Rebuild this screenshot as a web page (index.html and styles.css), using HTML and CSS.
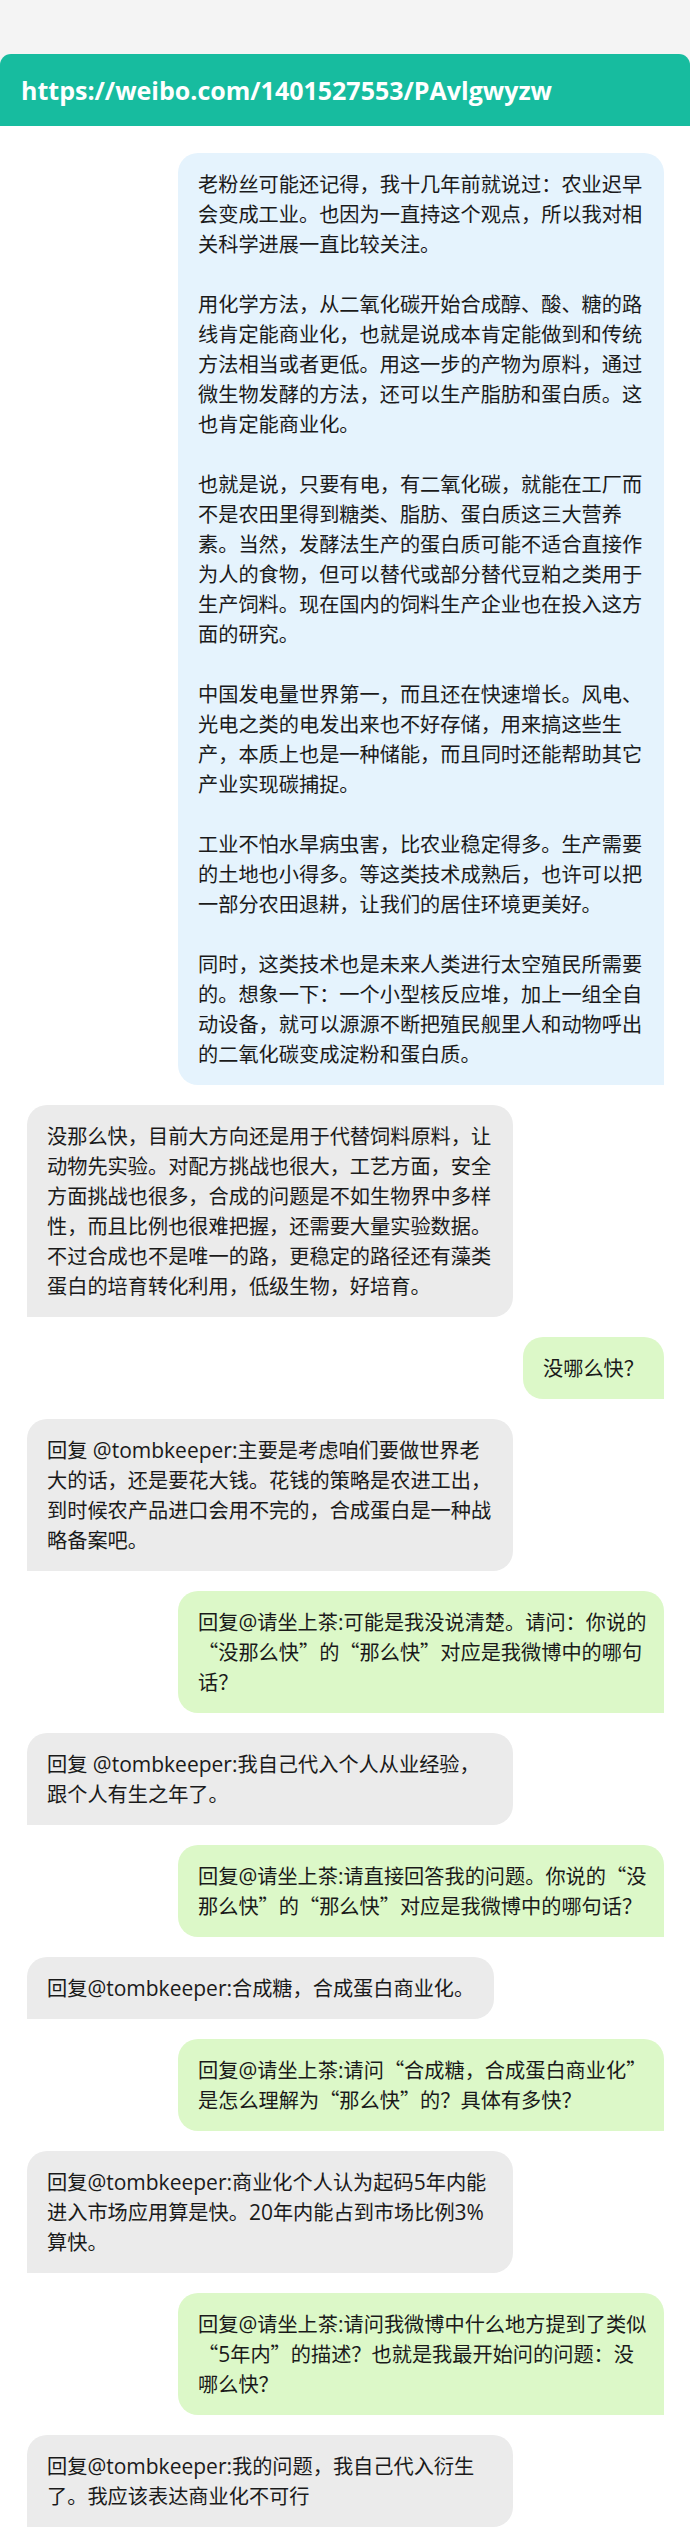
FILE: index.html
```html
<!DOCTYPE html>
<html lang="zh-CN">
<head>
<meta charset="utf-8">
<title>微博对话</title>
<link rel="stylesheet" href="styles.css">
</head>
<body>
<div class="page">
  <header class="header">https://weibo.com/1401527553/PAvlgwyzw</header>
  <main class="chat">
    <div class="bubble right blue">
      <p>老粉丝可能还记得，我十几年前就说过：农业迟早会变成工业。也因为一直持这个观点，所以我对相关科学进展一直比较关注。</p>
      <p>用化学方法，从二氧化碳开始合成醇、酸、糖的路线肯定能商业化，也就是说成本肯定能做到和传统方法相当或者更低。用这一步的产物为原料，通过微生物发酵的方法，还可以生产脂肪和蛋白质。这也肯定能商业化。</p>
      <p>也就是说，只要有电，有二氧化碳，就能在工厂而不是农田里得到糖类、脂肪、蛋白质这三大营养素。当然，发酵法生产的蛋白质可能不适合直接作为人的食物，但可以替代或部分替代豆粕之类用于生产饲料。现在国内的饲料生产企业也在投入这方面的研究。</p>
      <p>中国发电量世界第一，而且还在快速增长。风电、光电之类的电发出来也不好存储，用来搞这些生产，本质上也是一种储能，而且同时还能帮助其它产业实现碳捕捉。</p>
      <p>工业不怕水旱病虫害，比农业稳定得多。生产需要的土地也小得多。等这类技术成熟后，也许可以把一部分农田退耕，让我们的居住环境更美好。</p>
      <p>同时，这类技术也是未来人类进行太空殖民所需要的。想象一下：一个小型核反应堆，加上一组全自动设备，就可以源源不断把殖民舰里人和动物呼出的二氧化碳变成淀粉和蛋白质。</p>
    </div>

    <div class="bubble left gray">没那么快，目前大方向还是用于代替饲料原料，让动物先实验。对配方挑战也很大，工艺方面，安全方面挑战也很多，合成的问题是不如生物界中多样性，而且比例也很难把握，还需要大量实验数据。不过合成也不是唯一的路，更稳定的路径还有藻类蛋白的培育转化利用，低级生物，好培育。</div>

    <div class="bubble right green">没哪么快？</div>

    <div class="bubble left gray lines">回复<span class="en"> @tombkeeper:</span>主要是考虑咱们要做世界老<br>大的话，还是要花大钱。花钱的策略是农进工出，<br>到时候农产品进口会用不完的，合成蛋白是一种战<br>略备案吧。</div>

    <div class="bubble right green lines">回复<span class="en">@</span>请坐上茶<span class="en">:</span>可能是我没说清楚。请问：你说的<br>“没那么快”的“那么快”对应是我微博中的哪句<br>话？</div>

    <div class="bubble left gray lines">回复<span class="en"> @tombkeeper:</span>我自己代入个人从业经验，<br>跟个人有生之年了。</div>

    <div class="bubble right green lines">回复<span class="en">@</span>请坐上茶<span class="en">:</span>请直接回答我的问题。你说的“没<br>那么快”的“那么快”对应是我微博中的哪句话？</div>

    <div class="bubble left gray">回复<span class="en">@tombkeeper:</span>合成糖，合成蛋白商业化。</div>

    <div class="bubble right green lines">回复<span class="en">@</span>请坐上茶<span class="en">:</span>请问“合成糖，合成蛋白商业化”<br>是怎么理解为“那么快”的？具体有多快？</div>

    <div class="bubble left gray lines">回复<span class="en">@tombkeeper:</span>商业化个人认为起码<span class="en">5</span>年内能<br>进入市场应用算是快。<span class="en">20</span>年内能占到市场比例<span class="en">3%</span><br>算快。</div>

    <div class="bubble right green lines">回复<span class="en">@</span>请坐上茶<span class="en">:</span>请问我微博中什么地方提到了类似<br>“<span class="en">5</span>年内”的描述？也就是我最开始问的问题：没<br>哪么快？</div>

    <div class="bubble left gray lines">回复<span class="en">@tombkeeper:</span>我的问题，我自己代入衍生<br>了。我应该表达商业化不可行</div>
  </main>
</div>
</body>
</html>
```

FILE: styles.css
```css
* {
  box-sizing: border-box;
}

html, body {
  margin: 0;
  padding: 0;
}

body {
  background: #ffffff;
  font-family: "Noto Sans CJK SC", "Noto Sans", sans-serif;
  color: #1a1a1a;
}

.page {
  background: #f4f4f4;
  padding-top: 54px;
  width: 690px;
}

.header {
  height: 72px;
  display: flex;
  align-items: center;
  padding-left: 21px;
  background: #17bc9f;
  border-radius: 11px 11px 0 0;
  color: #ffffff;
  font-family: "Open Sans", "Noto Sans", sans-serif;
  font-weight: 700;
  font-size: 25px;
}

.chat {
  background: #ffffff;
  padding: 27px 26px 15px 27px;
  display: flex;
  flex-direction: column;
  gap: 20px;
}

.bubble {
  max-width: 486px;
  padding: 16px 20px;
  border-radius: 20px;
  font-size: 20.2px;
  line-height: 30px;
  text-spacing-trim: space-all;
  text-autospace: no-autospace;
}

.bubble p {
  margin: 0 0 30px;
}

.bubble p:last-child {
  margin-bottom: 0;
}

.left {
  align-self: flex-start;
  border-bottom-left-radius: 0;
}

.right {
  align-self: flex-end;
  border-bottom-right-radius: 0;
}

.lines {
  width: 486px;
  white-space: nowrap;
}

.blue {
  background: #e5f3fd;
}

.gray {
  background: #ebebeb;
}

.green {
  background: #dcf8c8;
}

.en {
  font-family: "Open Sans", "Noto Sans", sans-serif;
  font-size: 21px;
}
```
